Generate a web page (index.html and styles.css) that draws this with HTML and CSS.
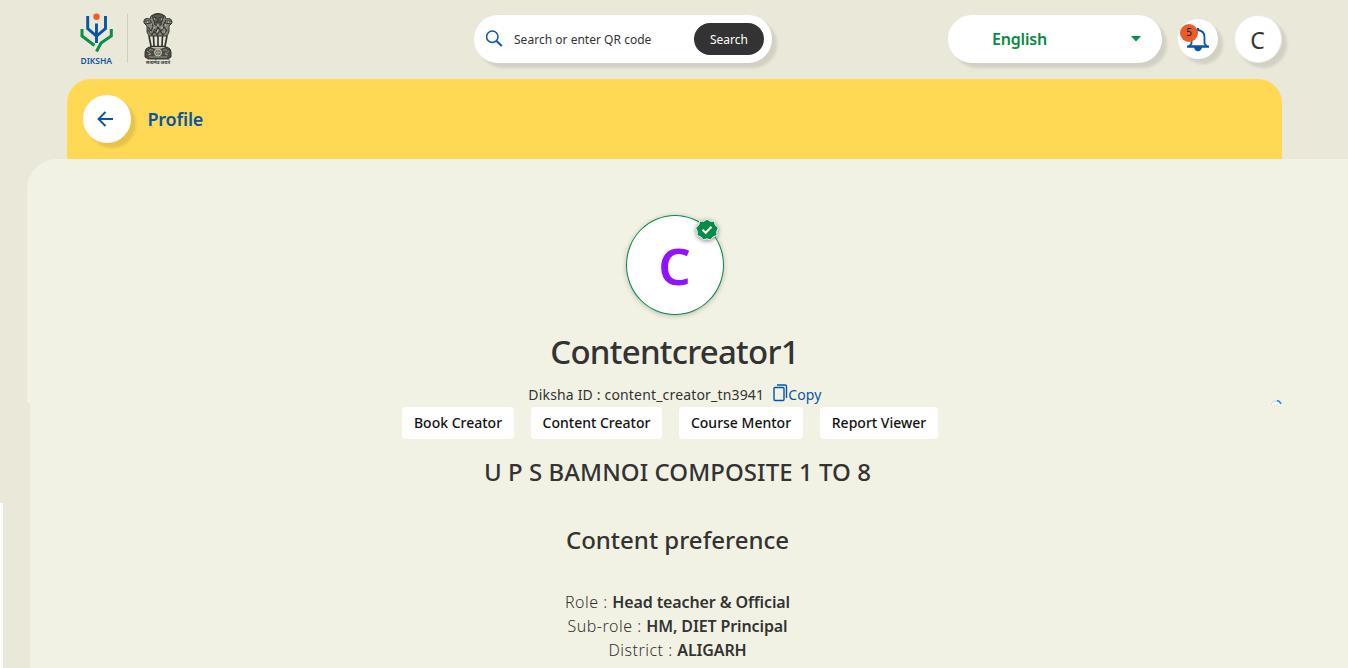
FILE: index.html
```html
<!DOCTYPE html>
<html lang="en">
<head>
<meta charset="utf-8">
<title>Profile</title>
<link rel="stylesheet" href="styles.css">
</head>
<body>
<header class="header">
  <div class="brand">
    <svg class="diksha" width="34" height="56" viewBox="0 0 34 56" fill="none">
      <circle cx="16.500" cy="4.700" r="3.200" fill="#f15a29"/>
      <path d="M7.700 4v12.500L16.500 24l9-7.500V4M16.500 11.500v19.500" stroke="#0855a4" stroke-width="2.900"/>
      <path d="M2 17v7l12.500 9.500M31.300 17v7L21 31l-4.500 8.500" stroke="#0a8f45" stroke-width="3"/>
      <text x="0.500" y="52" textLength="31.500" lengthAdjust="spacingAndGlyphs">DIKSHA</text>
    </svg>
    <span class="divider"></span>
    <svg class="emblem" width="34" height="54" viewBox="0 0 34 54" fill="none" stroke="#35352f">
      <path d="M10 3q7-5 14 0l1 3q6-2 6 4l-3 3v6l-2 4H8l-2-4v-6l-3-3q-1-6 6-4z" fill="#85847a"/>
      <path d="M11 3q6-4 12 0l-2 5-1 4h-6l-1-4z" fill="#5d5c54"/>
      <path d="M3 8h5M4 11l6-1M26 8h5M24 10l6 1M13 4l3 1M21 4l-3 1M17 5v4M14 9h6M9 7l3 6M25 7l-3 6M7 14l3 4 2-4 3 4 2-4 3 4 3-4 3 4M7 17l4 5 2-4 3 4 3-4 3 4 4-5" stroke-width="1.100"/>
      <path d="M13 6h1M20 6h1M6 9h1M27 9h1M17 11v2M12 15h2M20 15h2M9 19h1M16 18h1M23 19h1M10 11h1M24 12h1" stroke="#deddcd"/>
      <path d="M8 23l2 10M12.500 23l.5 10M17 23v10M21.500 23l-.5 10M26 23l-2 10" stroke-width="1.700"/>
      <path d="M9 33.500h16" stroke-width="1.500"/>
      <path d="M5 36l3-2 5 2h8l5-2 3 2 1 3v5l-3 2H7l-3-2v-5z" fill="#4b4b44"/>
      <circle cx="17" cy="39.500" r="3.500" fill="#77766c" stroke="#c8c7b9"/>
      <path d="M17 37v5M14.500 39.500h5M6 38l4 3-3 1M28 38l-4 3 3 1M8 37h4M22 37h4M8 44h18" stroke="#aaa99d" stroke-width=".8"/>
      <text class="motto" x="5" y="51" textLength="24" lengthAdjust="spacingAndGlyphs">सत्यमेव जयते</text>
    </svg>
  </div>
  <form class="search">
    <svg width="18" height="18" viewBox="0 0 18 18" fill="none" stroke="#0855a4"><circle cx="6.300" cy="6.800" r="5.700" stroke-width="1.500"/><path d="M10.500 11l5.300 5" stroke-width="2"/></svg>
    <span class="hint">Search or enter QR code</span>
    <button type="button" class="go">Search</button>
  </form>
  <div class="language"><span>English</span><svg width="10" height="6" viewBox="0 0 10 6"><path d="M0 0h10L5 5.500z" fill="#078b47"/></svg></div>
  <div class="bell">
    <svg width="22" height="25" viewBox="0 0 22 25"><path d="M2 19.500l2.500-3V10q0-6 6.500-7 6.500 1 6.500 7v6.500l2.500 3z" fill="none" stroke="#0855a4" stroke-width="1.800"/><path d="M10 1h2v2h-2zM0 18.600h22v1.900H0zM7 20.500h8q-1 3.800-4 3.800t-4-3.800" fill="#0855a4"/></svg>
    <span class="badge">5</span>
  </div>
  <div class="user">C</div>
</header>
<div class="titlebar">
  <div class="back"><svg width="16" height="16" viewBox="0 0 16 16" fill="none" stroke="#0855a4" stroke-width="1.900"><path d="M16 8H1.500M8.500 1L1.500 8l7 7"/></svg></div>
  <h2>Profile</h2>
</div>
<main class="sheet">
  <div class="avatar">C
    <svg class="verified" width="26" height="26" viewBox="0 0 26 26"><path d="M13 2l3.300 2.300 4-.3 1 3.900L24.400 11l-1.700 3.500.4 4-3.800 1.300L16.500 23 13 21.800 9.500 23l-2.800-3.200-3.800-1.300.4-4L1.600 11l3.100-3.100 1-3.900 4 .3z" fill="#078b47" stroke="#fff" stroke-width="1"/><path d="M8.500 12.800l3.200 3 5.800-6" fill="none" stroke="#fff" stroke-width="2"/></svg>
  </div>
  <h1>Contentcreator1</h1>
  <div class="id"><span>Diksha ID : content_creator_tn3941</span><a class="copy"><svg width="15" height="18" viewBox="0 0 15 18" fill="none" stroke="#0855a4" stroke-width="1.400"><rect x="1" y="3.500" width="10" height="13" rx="1"/><path d="M4 1h8q1.500 0 1.500 1.500V14"/></svg>Copy</a></div>
  <div class="roles"><span class="r1">Book Creator</span><span class="r2">Content Creator</span><span class="r3">Course Mentor</span><span class="r4">Report Viewer</span></div>
  <div class="school">U P S BAMNOI COMPOSITE 1 TO 8</div>
  <h3>Content preference</h3>
  <div class="prefs">
    <div>Role : <b>Head teacher &amp; Official</b></div>
    <div>Sub-role : <b>HM, DIET Principal</b></div>
    <div>District : <b>ALIGARH</b></div>
    <div>State : <b>Uttar Pradesh</b></div>
  </div>
  <svg class="loader" width="12" height="5" viewBox="0 0 12 5"><path d="M1 5Q6-1 11 5" fill="#fff" stroke="#b9d3ea"/><path d="M7 1.500q3 .5 4 3.500" fill="none" stroke="#3f87ca" stroke-width="1.500"/></svg>
</main>
<div class="gutter"></div>
<div class="edge"></div>
</body>
</html>
```
FILE: styles.css
```css
* { box-sizing: border-box; }
body { margin: 0; height: 668px; overflow: hidden; position: relative; background: #e9e8d9; color: #333; font-family: "Noto Sans", sans-serif; }
.header { height: 79px; padding: 0 64px 0 80px; display: flex; align-items: flex-start; }
.header > * { flex: none; }
.brand { display: flex; width: 394px; padding-top: 12px; }
.diksha text { font: 600 9px "Noto Sans", sans-serif; fill: #0855a4; }
.divider { width: 1px; height: 49px; background: #d0cfc1; margin: 2px 13px 0 13px; }
.emblem { margin-top: 1px; }
.motto { font: 700 5px "Noto Sans", sans-serif; fill: #35352f; stroke: none; }
.search, .language, .bell, .user, .back { background: #fff; box-shadow: 5px 5px 3px rgba(0,0,0,.1); }
.search { display: flex; align-items: center; width: 298px; height: 48px; margin: 15px 0 0; padding: 0 8px 0 12px; border-radius: 24px; }
.hint { margin-left: 10px; width: 180px; font-size: 12px; padding-top: 1px; letter-spacing: .02px; }
.go { width: 70px; height: 32px; border: 0; border-radius: 16px; background: #333; color: #fff; font: 12px "Noto Sans", sans-serif; padding: 0; }
.language { width: 214px; height: 48px; margin: 15px 0 0 176px; border-radius: 24px; display: flex; align-items: center; justify-content: space-between; padding: 0 21px 0 44px; color: #078b47; font-size: 16px; font-weight: 600; letter-spacing: -.2px; }
.bell { position: relative; width: 40px; height: 40px; border-radius: 50%; margin: 19px 0 0 16px; padding: 8px 9px; }
.bell svg { display: block; }
.badge { position: absolute; left: 2px; top: 5px; width: 18px; height: 18px; border-radius: 50%; background: #e95b2b; color: #222; font-size: 10px; line-height: 17px; text-align: center; }
.user { width: 48px; height: 48px; margin: 15px 0 0 16px; border-radius: 50%; display: flex; align-items: center; justify-content: center; font-size: 23px; border: 1px solid #eceae5; padding: 2px 1px 0 0; }
.titlebar { height: 80px; width: 1215px; margin-left: 67px; border-radius: 24px 24px 0 0; background: #ffd954; display: flex; padding: 16px; align-items: center; gap: 16.5px; }
.back { width: 48px; height: 48px; border-radius: 50%; display: flex; align-items: center; justify-content: center; padding-right: 4px; }
h2 { margin: 0; font-size: 18px; font-weight: 600; color: #0855a4; letter-spacing: -.2px; }
.sheet { position: relative; margin-left: 27px; height: 509px; border-radius: 30px 0 0; background: #f2f2e4; padding: 56px 26px 0 0; display: flex; flex-direction: column; align-items: center; }
.sheet > * { flex: none; }
.avatar { position: relative; width: 98px; height: 100px; border: 1px solid #078b47; border-radius: 50%; background: #fff; box-shadow: 0 1px 5px rgba(0,0,0,.25); color: #9013fe; font-size: 51px; font-weight: 600; line-height: 98px; text-align: center; }
.verified { position: absolute; right: 3px; top: 1px; filter: drop-shadow(0 1px 2px rgba(0,0,0,.5)); }
h1 { margin: 14px 0 0; font-size: 33px; font-weight: 500; line-height: 46px; letter-spacing: -.74px; }
.id { display: flex; line-height: 20px; margin: 10px 0 0 1px; font-size: 14px; height: 22px; letter-spacing: .17px; white-space: nowrap; }
.copy { color: #0855a4; display: flex; margin-left: 9px; }
.copy svg { margin-top: -1px; }
.roles { display: flex; gap: 17px; font-size: 14px; font-weight: 500; color: #111; margin-right: 9px; }
.roles span { height: 32px; line-height: 32px; border-radius: 4px; background: #fff; text-align: center; white-space: nowrap; }
.r1 { width: 112px; } .r2 { width: 131px; } .r3 { width: 124px; } .r4 { width: 118px; }
.school { margin: 15px 0 0 6px; font-size: 24px; line-height: 36px; font-weight: 500; letter-spacing: .05px; white-space: nowrap; }
h3 { margin: 32px 0 0 6px; font-size: 24px; line-height: 36px; font-weight: 500; }
.prefs { margin: 32px 0 0 6px; font-size: 16px; line-height: 24px; text-align: center; white-space: nowrap; font-weight: 330; letter-spacing: .5px; }
.prefs b { font-weight: 600; letter-spacing: -.12px; }
.loader { position: absolute; left: 1243px; top: 240px; }
.gutter { position: absolute; left: 27px; top: 403px; width: 3px; height: 265px; background: #e9e8d9; }
.edge { position: absolute; left: 0; top: 503px; width: 3px; height: 165px; background: #fff; }
```
